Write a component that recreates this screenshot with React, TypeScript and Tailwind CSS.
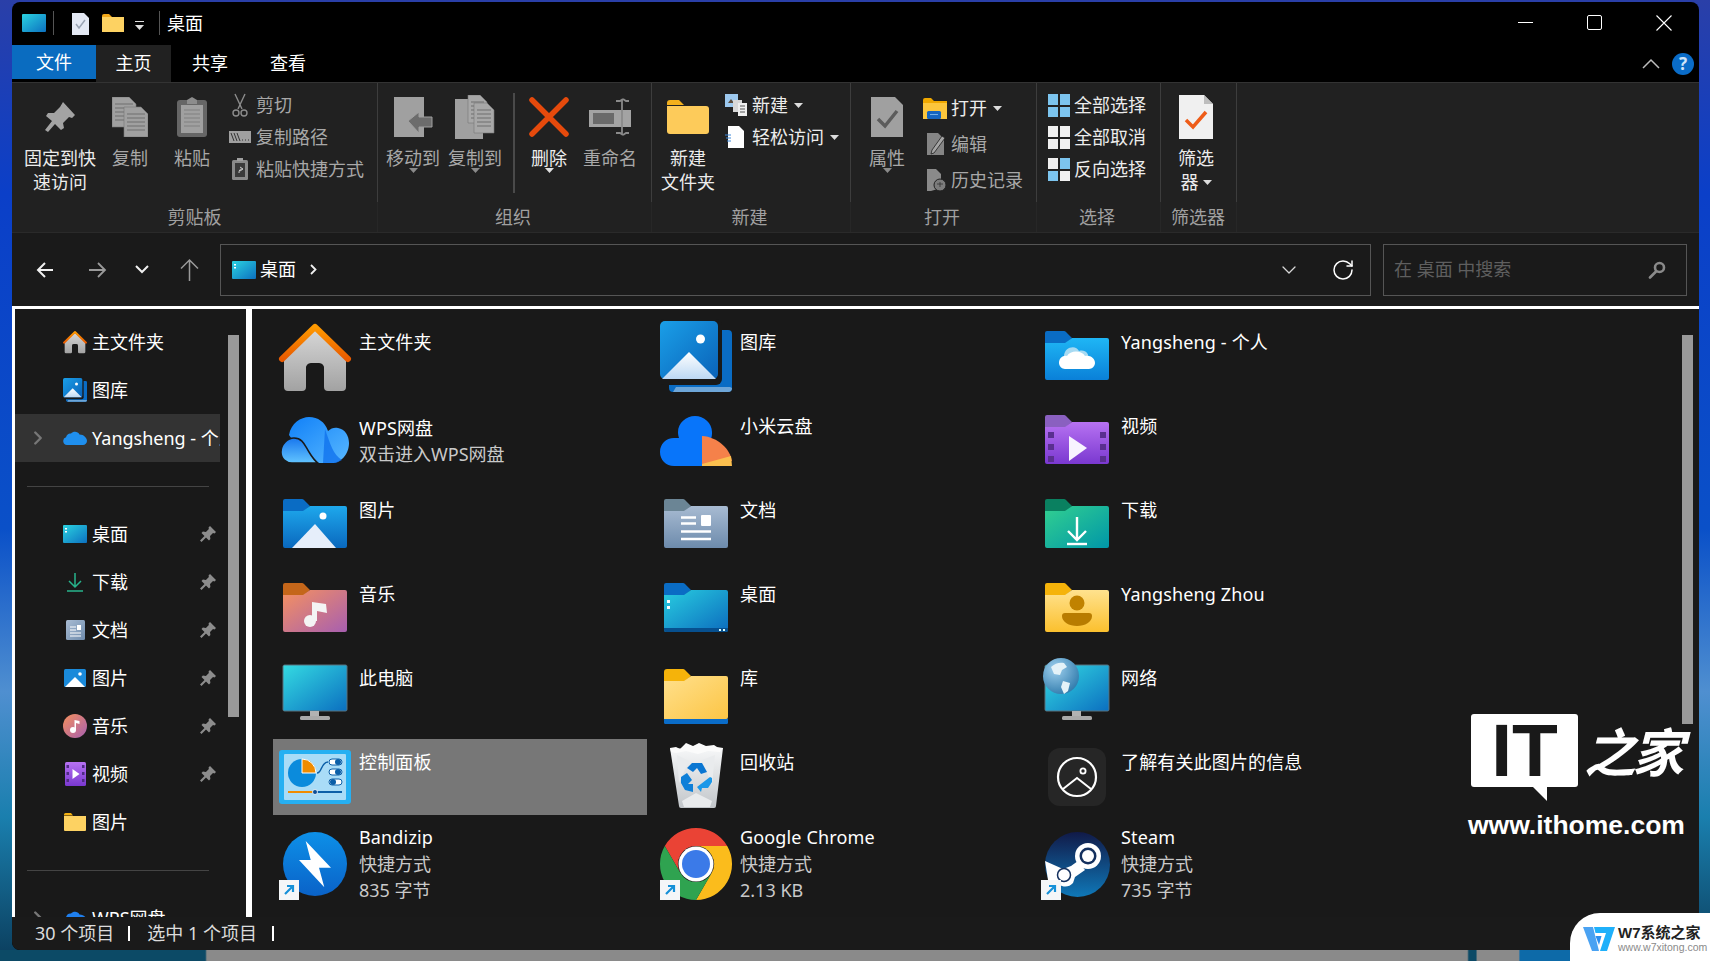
import { useId, type ReactNode } from "react";
import { ChevronDown, ChevronRight, RotateCw } from "lucide-react";

const GREY = "#a3a3a3";

function Ic({ size = 72, children }: { size?: number; children: ReactNode }) {
  return (
    <svg width={size} height={size} viewBox="0 0 72 72" className="overflow-visible shrink-0">
      {children}
    </svg>
  );
}

function Grad({ id, from, to, diag }: { id: string; from: string; to: string; diag?: boolean }) {
  return (
    <linearGradient id={id} x1="0" y1="0" x2={diag ? "1" : "0"} y2="1">
      <stop offset="0" stopColor={from} />
      <stop offset="1" stopColor={to} />
    </linearGradient>
  );
}

function Folder({
  tab,
  from,
  to,
  size,
  diag,
  children,
}: {
  tab: string;
  from: string;
  to: string;
  size?: number;
  diag?: boolean;
  children?: ReactNode;
}) {
  const id = useId();
  return (
    <Ic size={size}>
      <defs>
        <Grad id={id} from={from} to={to} diag={diag} />
      </defs>
      <path d="M4 12a2 2 0 0 1 2-2h17a3 3 0 0 1 2 1l6 6-6 5H4z" fill={tab} />
      <path d="M4 22h20l7-5h35a2 2 0 0 1 2 2v38a2 2 0 0 1-2 2H6a2 2 0 0 1-2-2z" fill={`url(#${id})`} />
      {children}
    </Ic>
  );
}

function HomeIcon({ size }: { size?: number }) {
  const a = useId();
  const b = useId();
  return (
    <Ic size={size}>
      <defs>
        <Grad id={a} from="#d6d6d6" to="#a2a2a2" />
        <Grad id={b} from="#ff9a00" to="#e85a00" />
      </defs>
      <path d="M5 36 36 9l31 27v30a4 4 0 0 1-4 4H49a4 4 0 0 1-4-4V48a5 5 0 0 0-5-6h-8a5 5 0 0 0-5 6v18a4 4 0 0 1-4 4H9a4 4 0 0 1-4-4z" fill={`url(#${a})`} />
      <path d="M3 38 36 6l33 32" fill="none" stroke={`url(#${b})`} strokeWidth="6" strokeLinecap="round" strokeLinejoin="round" />
    </Ic>
  );
}

function GalleryIcon({ size }: { size?: number }) {
  const a = useId();
  const b = useId();
  return (
    <Ic size={size}>
      <defs>
        <Grad id={a} from="#1a9fe8" to="#0a62b8" diag />
        <Grad id={b} from="#ffffff" to="#bcd8f4" />
      </defs>
      <path d="M58 9h10a4 4 0 0 1 4 4v54a4 4 0 0 1-4 4H13a4 4 0 0 1-4-4v-5h49z" fill="#0a6cc4" />
      <path d="M16 66h54l2 1a4 4 0 0 1-4 4H13z" fill="#6ea6d8" />
      <rect x="-2" y="-2" width="64" height="66" rx="6" fill="#191919" />
      <rect x="0" y="0" width="58" height="58" rx="5" fill={`url(#${a})`} />
      <circle cx="40.500" cy="18" r="4.500" fill="#fff" />
      <path d="M2 58 29 31l27 27z" fill={`url(#${b})`} />
    </Ic>
  );
}

function WpsIcon({ size }: { size?: number }) {
  const a = useId();
  const b = useId();
  return (
    <Ic size={size}>
      <defs>
        <Grad id={a} from="#1080f8" to="#58b8ff" diag />
        <Grad id={b} from="#1877ee" to="#62c4ff" />
      </defs>
      <path d="M10 30C12 18 22 12 30 12c9 0 16 5 19 14 3-3 7-4 10-3 7 1 11 8 11 15 0 11-8 20-17 20H30z" fill={`url(#${a})`} />
      <path d="M46 24c5 14 8 26 17 31l-6 3H44z" fill="#0d6fec" opacity="0.75" />
      <path d="M2 47c0-8 7-14 13-14 9 0 11 8 15 14 3 5 6 9 9 11H13C7 58 2 54 2 47z" fill={`url(#${b})`} stroke="#191919" strokeWidth="1.500" />
    </Ic>
  );
}

function XiaomiIcon() {
  return (
    <Ic>
      <path d="M42 61H14C6 61 0 55 0 47c0-8 6-14 14-14h5c-1-3-1-5-1-6 0-9 8-16 17-16s17 7 17 16c0 2 0 4-1 7H42z" fill="#0875fa" />
      <path d="M42 31c16 1 28 13 30 25l-30 5z" fill="#f5814a" />
      <path d="M42 61v-2l29-8 1 10z" fill="#fbbf4e" />
    </Ic>
  );
}

function MonitorIcon({ globe }: { globe?: boolean }) {
  const a = useId();
  const b = useId();
  return (
    <Ic>
      <defs>
        <Grad id={a} from="#34dbe2" to="#0b6fc0" diag />
        <radialGradient id={b} cx="0.35" cy="0.3" r="0.8">
          <stop offset="0" stopColor="#9fd0ee" />
          <stop offset="1" stopColor="#2a76a8" />
        </radialGradient>
      </defs>
      <rect x="4" y="8" width="64" height="46" rx="1.500" fill={`url(#${a})`} stroke="#59737f" strokeWidth="1" />
      <rect x="31" y="54" width="9" height="6" fill="#b2b2b2" />
      <rect x="21" y="59" width="30" height="4" rx="1.500" fill="#a9a9a9" />
      {globe && (
        <g>
          <circle cx="20" cy="19" r="18" fill={`url(#${b})`} />
          <path d="M10 10c4-4 9-5 13-4l3 4-5 3-2 5-6-1zM22 24l7 2-2 8-4 3-3-7z" fill="#e4f2f8" />
        </g>
      )}
    </Ic>
  );
}

function ControlIcon() {
  return (
    <Ic>
      <rect x="0" y="9" width="72" height="54" rx="3" fill="#26b0f2" />
      <rect x="5" y="13" width="62" height="46" rx="1" fill="#a9dcf7" />
      <circle cx="23" cy="32" r="14" fill="#0b8bdc" />
      <path d="M23 32V18a14 14 0 0 1 14 14z" fill="#f08c00" stroke="#fff" strokeWidth="1" />
      <path d="M38 32c5 0 4-11 11-11" fill="none" stroke="#0b5fa8" strokeWidth="1.500" />
      <rect x="50" y="18" width="13" height="6" rx="3" fill="#fff" stroke="#0b5fa8" />
      <rect x="50" y="28" width="13" height="6" rx="3" fill="#fff" stroke="#0b5fa8" />
      <rect x="50" y="38" width="13" height="6" rx="3" fill="#fff" stroke="#0b5fa8" />
      <circle cx="59" cy="21" r="3" fill="#0b5fa8" />
      <circle cx="59" cy="31" r="3" fill="#0b5fa8" />
      <circle cx="54" cy="41" r="3" fill="#0b5fa8" />
      <rect x="9" y="50" width="27" height="2" fill="#f08c00" />
      <rect x="36" y="50" width="27" height="2" fill="#0b5fa8" />
      <circle cx="36" cy="51" r="2.500" fill="#0b4f98" stroke="#fff" strokeWidth="0.800" />
    </Ic>
  );
}

function RecycleIcon() {
  const a = useId();
  return (
    <Ic>
      <defs>
        <Grad id={a} from="#f6f7f8" to="#c2c6ca" />
      </defs>
      <path d="M10 7l17 1 36-1-7 58a2 2 0 0 1-2 2H21a2 2 0 0 1-2-2z" fill={`url(#${a})`} />
      <path d="M10 7l6-1 4 2 6-6 7 3 6-3 7 3 8-1 3 2 6 1-3 4-12-1-10 3-12-3-10 2-5-1z" fill="#fbfbfb" />
      <path d="M17 14l12 6-10 22zM55 14l-3 30-10-25zM22 60l14-8 16 8-2 6H24z" fill="#e9ebed" />
      <path d="M27 27l5-5h10l5 9-6 2-4-6-4 4z" fill="#0a76d2" />
      <path d="M21 36l6-4 5 7-4 4h5v8l-8-2-4-7z" fill="#0e7fd8" />
      <path d="M52 37l-2-1-13 10 4 5 1-4h6l4-6z" fill="#1a97e8" />
    </Ic>
  );
}

function InfoIcon() {
  return (
    <Ic>
      <rect x="7" y="7" width="58" height="58" rx="12" fill="#262626" />
      <circle cx="36" cy="36" r="19" fill="none" stroke="#fff" strokeWidth="2.200" />
      <circle cx="42" cy="30" r="2.600" fill="none" stroke="#fff" strokeWidth="1.800" />
      <path d="M22 48l14-11 14 11" fill="none" stroke="#fff" strokeWidth="2" />
    </Ic>
  );
}

function ShortcutBadge() {
  return (
    <g>
      <rect x="0" y="55" width="20" height="20" fill="#f4f6f8" />
      <path d="M6 69l7-7M8 61h6v6" fill="none" stroke="#1590d8" strokeWidth="2.200" />
    </g>
  );
}

function BandizipIcon() {
  const a = useId();
  return (
    <Ic>
      <defs>
        <Grad id={a} from="#0d90e8" to="#0a62c8" />
      </defs>
      <circle cx="36" cy="39" r="32" fill={`url(#${a})`} />
      <path d="M26.700 16 52 42.700H40L45.300 62.300 20 35h11.700z" fill="#fff" />
      <ShortcutBadge />
    </Ic>
  );
}

function ChromeIcon() {
  return (
    <Ic>
      <path d="M36 3A36 36 0 0 1 67.200 21H36A18 18 0 0 0 20.400 48L4.800 21A36 36 0 0 1 36 3z" fill="#ea4335" />
      <path d="M67.200 21A36 36 0 0 1 36 75L51.600 48A18 18 0 0 0 36 21z" fill="#fbbc1c" />
      <path d="M4.800 21A36 36 0 0 0 36 75L51.600 48A18 18 0 0 1 20.400 48z" fill="#2fa350" />
      <circle cx="36" cy="39" r="17.500" fill="#fff" />
      <circle cx="36" cy="39" r="14" fill="#3b7ae8" />
      <ShortcutBadge />
    </Ic>
  );
}

function SteamIcon() {
  const a = useId();
  return (
    <Ic>
      <defs>
        <Grad id={a} from="#111a48" to="#0f78b8" />
      </defs>
      <circle cx="36.500" cy="39.500" r="32.500" fill={`url(#${a})`} />
      <path d="M4 36l18 8 8-3 7-5 7 9-10 7-2 6a11 11 0 0 1-11 3L7 55z" fill="#fff" />
      <circle cx="47" cy="31" r="13" fill="#fff" />
      <circle cx="47" cy="31" r="8.500" fill="#14305e" />
      <circle cx="47" cy="31" r="6" fill="#fff" />
      <circle cx="23" cy="50" r="6.500" fill="#fff" stroke="#14305e" strokeWidth="1.500" />
      <ShortcutBadge />
    </Ic>
  );
}

function LibraryIcon() {
  const a = useId();
  return (
    <Ic>
      <defs>
        <Grad id={a} from="#ffe08c" to="#fcc545" diag />
      </defs>
      <rect x="4" y="61" width="64" height="6" rx="1.500" fill="#0a6cc8" />
      <path d="M4 15a3 3 0 0 1 3-3h16a3 3 0 0 1 2 1l6 6-6 5H4z" fill="#f5b30a" />
      <path d="M4 24h20l7-5h35a2 2 0 0 1 2 2v39a2 2 0 0 1-2 2H4z" fill={`url(#${a})`} />
    </Ic>
  );
}

const folderIcons = {
  pictures: (
    <Folder tab="#0a6cc4" from="#1ea8ec" to="#0a68be">
      <circle cx="44" cy="27" r="3.500" fill="#fff" />
      <path d="M13 59 36 35l21 24z" fill="#e6eefa" />
    </Folder>
  ),
  docs: (
    <Folder tab="#6b8595" from="#a8bbd2" to="#6d8bac">
      <path d="M21 28.500h15M21 34.500h15M21 42.500h30M21 50h30" stroke="#fff" strokeWidth="2.600" />
      <rect x="41" y="26" width="10" height="11" rx="1" fill="#fff" />
    </Folder>
  ),
  desktop: (
    <Folder tab="#0a6cc4" from="#28cde0" to="#0c6cbe" diag>
      <path d="M4 55h64v2a2 2 0 0 1-2 2H6a2 2 0 0 1-2-2z" fill="#07508f" />
      <path d="M7 27h3v3H7zM7 33h3v3H7z" fill="#fff" />
      <path d="M59 56h2v2h-2zM63 56h2v2h-2z" fill="#dff" />
    </Folder>
  ),
  music: (
    <Folder tab="#c4661a" from="#f59160" to="#a75fb0" diag>
      <circle cx="31" cy="48" r="6" fill="#f4f4f4" />
      <path d="M33 48V29l14 2 1 9-10-2v10z" fill="#f4f4f4" />
    </Folder>
  ),
  onedrive: (
    <Folder tab="#0a6cc4" from="#1fb6f5" to="#0a80d8">
      <g transform="translate(-3 -4)">
        <path d="M26 39c0-9 12-12 15-5 6-2 11 3 9 8H26z" fill="#a7daf2" />
        <path d="M21 46c0-5 4-8 8-7 3-6 15-6 18 0 6-1 10 3 10 7 0 3-3 6-6 6H27c-3 0-6-3-6-6z" fill="#fff" />
      </g>
    </Folder>
  ),
  video: (
    <Folder tab="#8a60c0" from="#b772f2" to="#7a38d0">
      <path d="M7 27h6v6H7zM7 39h6v6H7zM7 51h6v6H7zM59 27h6v6h-6zM59 39h6v6h-6zM59 51h6v6h-6z" fill="#5a2f90" />
      <path d="M28 31l18 12-18 13z" fill="#f8f4ff" />
    </Folder>
  ),
  download: (
    <Folder tab="#0a8060" from="#32d090" to="#0096a8" diag>
      <path d="M36 28v23M27 42l9 9 9-9" fill="none" stroke="#fff" strokeWidth="2.400" />
      <path d="M26 55h20" stroke="#fff" strokeWidth="2.400" />
    </Folder>
  ),
  user: (
    <Folder tab="#f5b30a" from="#ffe28e" to="#fbc02e">
      <circle cx="36" cy="30" r="7.500" fill="#c08200" />
      <path d="M24 40h24a3 3 0 0 1 3 3c0 6-7 10-15 10s-15-4-15-10a3 3 0 0 1 3-3z" fill="#b87c00" />
    </Folder>
  ),
};

type Tile = { icon: ReactNode; name: string; lines?: string[]; selected?: boolean };

const tiles: Tile[] = [
  { icon: <HomeIcon />, name: "主文件夹" },
  { icon: <GalleryIcon />, name: "图库" },
  { icon: folderIcons.onedrive, name: "Yangsheng - 个人" },
  { icon: <WpsIcon />, name: "WPS网盘", lines: ["双击进入WPS网盘"] },
  { icon: <XiaomiIcon />, name: "小米云盘" },
  { icon: folderIcons.video, name: "视频" },
  { icon: folderIcons.pictures, name: "图片" },
  { icon: folderIcons.docs, name: "文档" },
  { icon: folderIcons.download, name: "下载" },
  { icon: folderIcons.music, name: "音乐" },
  { icon: folderIcons.desktop, name: "桌面" },
  { icon: folderIcons.user, name: "Yangsheng Zhou" },
  { icon: <MonitorIcon />, name: "此电脑" },
  { icon: <LibraryIcon />, name: "库" },
  { icon: <MonitorIcon globe />, name: "网络" },
  { icon: <ControlIcon />, name: "控制面板", selected: true },
  { icon: <RecycleIcon />, name: "回收站" },
  { icon: <InfoIcon />, name: "了解有关此图片的信息" },
  { icon: <BandizipIcon />, name: "Bandizip", lines: ["快捷方式", "835 字节"] },
  { icon: <ChromeIcon />, name: "Google Chrome", lines: ["快捷方式", "2.13 KB"] },
  { icon: <SteamIcon />, name: "Steam", lines: ["快捷方式", "735 字节"] },
];

// ---- ribbon glyphs ----

function Sheet({ x, y, w, h, fill = "#a0a0a0", lines }: { x: number; y: number; w: number; h: number; fill?: string; lines?: boolean }) {
  const rows = lines ? Array.from({ length: Math.floor((h - 8) / 4) }, (_, i) => y + 7 + i * 4) : [];
  return (
    <g>
      <path d={`M${x} ${y}h${w - 7}l7 7v${h - 7}h-${w}z`} fill={fill} stroke="#777" strokeWidth="0.600" />
      {rows.map((r) => (
        <path key={r} d={`M${x + 3} ${r}h${w - 6}`} stroke="#6e6e6e" strokeWidth="1" />
      ))}
    </g>
  );
}

const PinGlyph = () => (
  <svg width="32" height="32" viewBox="0 0 32 32">
    <path d="M19 1l12 13-3 3-3-1-6 6 1 5-3 2-6-6-7 8-3-2 7-9-6-5 2-3 6 0 6-6z" fill={GREY} />
  </svg>
);
const CopyGlyph = () => (
  <svg width="36" height="40" viewBox="0 0 36 40">
    <Sheet x={0} y={0} w={24} h={30} lines />
    <Sheet x={12} y={10} w={24} h={30} lines />
  </svg>
);
const PasteGlyph = () => (
  <svg width="30" height="40" viewBox="0 0 30 40">
    <rect x="0" y="3" width="30" height="37" rx="3" fill="#666" />
    <rect x="4" y="8" width="22" height="28" fill="#a0a0a0" />
    <path d="M7 13h16M7 17h16M7 21h16M7 25h16M7 29h16" stroke="#808080" />
    <path d="M10 3l5-3 5 3v4H10z" fill="#8c8c8c" />
  </svg>
);
const ScissorsGlyph = () => (
  <svg width="16" height="24" viewBox="0 0 16 24" fill="none" stroke="#8c8c8c" strokeWidth="1.400" className="ml-[3px]">
    <path d="M3 1l7 15M13 1 6 16" />
    <circle cx="4" cy="20" r="3" />
    <circle cx="12" cy="20" r="3" />
  </svg>
);
const PathGlyph = () => (
  <svg width="22" height="12" viewBox="0 0 22 12">
    <rect width="22" height="12" fill="#a0a0a0" />
    <path d="M2 2l3 8M5 2l3 8M8 2l3 8" stroke="#333" strokeWidth="1" />
    <path d="M13 9h1M16 9h1M19 9h1" stroke="#333" strokeWidth="1.200" />
  </svg>
);
const PasteLinkGlyph = () => (
  <svg width="16" height="22" viewBox="0 0 16 22" className="ml-[3px]">
    <rect x="0" y="2" width="16" height="20" rx="1.500" fill="#8a8a8a" />
    <rect x="3" y="5" width="10" height="14" fill="#3a3a3a" />
    <path d="M5 0h6v3H5z" fill="#a0a0a0" />
    <path d="M7 15c0-3 1-4 3-4M8 9l3 2-3 2" stroke="#ccc" fill="none" />
  </svg>
);
const MoveGlyph = () => (
  <svg width="40" height="40" viewBox="0 0 40 40">
    <rect x="1" y="0" width="30" height="40" fill="#a0a0a0" />
    <path d="M15 24 26 15v5h13v10H26v6z" fill="#6c6c6c" stroke="#a0a0a0" strokeWidth="1" />
  </svg>
);
const CopyToGlyph = () => (
  <svg width="40" height="44" viewBox="0 0 40 44">
    <rect x="0" y="4" width="28" height="40" fill="#a0a0a0" />
    <Sheet x={13} y={0} w={19} h={28} fill="#a8a8a8" lines />
    <Sheet x={19} y={8} w={20} h={30} fill="#a8a8a8" lines />
  </svg>
);
const DeleteGlyph = () => (
  <svg width="42" height="42" viewBox="0 0 42 42">
    <path d="M4 4 38 38M38 4 4 38" stroke="#e64a0c" strokeWidth="5.500" strokeLinecap="round" />
  </svg>
);
const RenameGlyph = () => (
  <svg width="42" height="38" viewBox="0 0 42 38">
    <rect x="0" y="12" width="42" height="17" fill="#a3a3a3" />
    <rect x="4" y="15" width="21" height="11" fill="#6a6a6a" />
    <path d="M27 3h4l3-2M34 1l3 2h3M33 2v34M27 35h4l3 2M34 37l3-2h3" fill="none" stroke="#8a8a8a" strokeWidth="1.800" />
  </svg>
);
const NewFolderGlyph = () => (
  <svg width="42" height="34" viewBox="0 0 42 34">
    <path d="M0 3a3 3 0 0 1 3-3h9l5 5H0z" fill="#f3b01c" />
    <path d="M0 6h39a3 3 0 0 1 3 3v22a3 3 0 0 1-3 3H3a3 3 0 0 1-3-3z" fill="#fdcb5a" />
  </svg>
);
const NewItemGlyph = () => (
  <svg width="22" height="22" viewBox="0 0 22 22" className="ml-[1px]">
    <rect x="0" y="0" width="13" height="13" fill="#9cc8ee" />
    <path d="M3 9l3-4 3 4z" fill="#5a4a3a" />
    <rect x="8" y="6" width="9" height="12" fill="#d8d8d8" />
    <path d="M13 9h9v13h-9z" fill="#efefef" />
    <path d="M15 12h5M15 15h5M15 18h5" stroke="#555" />
  </svg>
);
const EasyGlyph = () => (
  <svg width="20" height="22" viewBox="0 0 20 22" className="ml-[1px]">
    <path d="M3 0h11l5 5v17H3z" fill="#fff" />
    <path d="M0 9h6M1 12h5M2 15h4" stroke="#3a86d8" strokeWidth="1" />
  </svg>
);
const PropsGlyph = () => (
  <svg width="32" height="40" viewBox="0 0 32 40">
    <path d="M0 0h24l8 8v32H0z" fill="#a0a0a0" />
    <path d="M7 22l7 7 12-15" fill="none" stroke="#5c5c5c" strokeWidth="3.500" />
  </svg>
);
const OpenGlyph = () => (
  <svg width="24" height="21" viewBox="0 0 24 21">
    <path d="M0 2a2 2 0 0 1 2-2h6l3 3h13v18H0z" fill="#f0a800" />
    <path d="M0 5h24v16H0z" fill="#fcc63c" />
    <rect x="4" y="13" width="14" height="8" rx="1.500" fill="#1565c0" />
    <path d="M7 16.500h8" stroke="#72b0e8" />
  </svg>
);
const EditGlyph = () => (
  <svg width="19" height="22" viewBox="0 0 19 22" className="ml-[4px]">
    <path d="M0 0h11l6 6v16H0z" fill="#858585" />
    <path d="M18 5 7 20l-3 1 1-4L15 3z" fill="#a5a5a5" stroke="#212121" strokeWidth="0.800" />
  </svg>
);
const HistoryGlyph = () => (
  <svg width="20" height="22" viewBox="0 0 20 22" className="ml-[4px]">
    <path d="M0 0h9l5 5v14L4 22H0z" fill="#8a8a8a" />
    <circle cx="13" cy="16" r="6" fill="#7c7c7c" stroke="#212121" />
    <path d="M10 15h6M13 13v5" stroke="#333" strokeWidth="0.800" />
  </svg>
);
function Grid4({ a, b, c, d }: { a: string; b: string; c: string; d: string }) {
  return (
    <svg width="22" height="23" viewBox="0 0 22 23">
      <rect x="0" y="0" width="10" height="11" fill={a} />
      <rect x="12" y="0" width="10" height="11" fill={b} />
      <rect x="0" y="13" width="10" height="10" fill={c} />
      <rect x="12" y="13" width="10" height="10" fill={d} />
    </svg>
  );
}
const FilterGlyph = () => (
  <svg width="34" height="44" viewBox="0 0 34 44">
    <path d="M0 0h25l9 9v35H0z" fill="#f0f0f0" />
    <path d="M25 0v9h9z" fill="#bdbdbd" />
    <path d="M7 25l7 7 13-15" fill="none" stroke="#ee5c18" strokeWidth="3.500" />
  </svg>
);
const Caret = ({ color = "#dcdcdc" }: { color?: string }) => (
  <svg width="9" height="5" viewBox="0 0 9 5" className="shrink-0">
    <path d="M0 0h9L4.500 5z" fill={color} />
  </svg>
);

function BigBtn({
  icon,
  lines,
  w,
  dim,
  caret,
  inlineCaret,
}: {
  icon: ReactNode;
  lines: string[];
  w: string;
  dim?: boolean;
  caret?: string;
  inlineCaret?: boolean;
}) {
  return (
    <div className={`flex flex-col items-center shrink-0 ${w}`}>
      <div className="h-[58px] flex items-center justify-center">{icon}</div>
      {lines.map((l, i) => (
        <div key={l} className={`flex items-center gap-[4px] h-[24px] leading-[24px] whitespace-nowrap ${dim ? "text-[#a8a8a8]" : "text-[#ececec]"}`}>
          {l}
          {inlineCaret && i === lines.length - 1 && <Caret />}
        </div>
      ))}
      {caret && (
        <div className="mt-[-2px]">
          <Caret color={caret} />
        </div>
      )}
    </div>
  );
}

function SmallRow({
  icon,
  label,
  iconW,
  h,
  dim,
  caret,
}: {
  icon: ReactNode;
  label: string;
  iconW: string;
  h: string;
  dim?: boolean;
  caret?: boolean;
}) {
  return (
    <div className={`flex items-center ${h}`}>
      <span className={`flex shrink-0 ${iconW}`}>{icon}</span>
      <span className={`whitespace-nowrap ${dim ? "text-[#a8a8a8]" : "text-[#ececec]"}`}>{label}</span>
      {caret && (
        <span className="ml-[6px]">
          <Caret />
        </span>
      )}
    </div>
  );
}

function Group({
  label,
  w,
  className = "",
  labelPad = "pr-[3px]",
  children,
}: {
  label: string;
  w: string;
  className?: string;
  labelPad?: string;
  children: ReactNode;
}) {
  return (
    <div className={`flex flex-col shrink-0 ${w}`}>
      <div className={`h-[119px] flex pt-[5px] border-r border-[#3d3d3d] ${className}`}>{children}</div>
      <div className={`h-[30px] flex items-center justify-center text-[#a0a0a0] border-r border-[#272727] ${labelPad}`}>{label}</div>
    </div>
  );
}

// ---- nav pane ----

const DesktopMini = () => (
  <svg width="24" height="18" viewBox="0 0 24 18">
    <defs>
      <linearGradient id="dm" x1="0" y1="0" x2="1" y2="1">
        <stop offset="0" stopColor="#2bd3e0" />
        <stop offset="1" stopColor="#0c70c0" />
      </linearGradient>
    </defs>
    <rect width="24" height="18" rx="1" fill="url(#dm)" />
    <path d="M2 3h2v1.500H2zM2 6h2v1.500H2z" fill="#fff" />
  </svg>
);
const DownloadMini = () => (
  <svg width="20" height="20" viewBox="0 0 20 20" fill="none" stroke="#27b48c" strokeWidth="1.500">
    <path d="M10 1v13M4 9l6 6 6-6M2 19h16" />
  </svg>
);
const DocMini = () => (
  <svg width="19" height="20" viewBox="0 0 19 20">
    <defs>
      <linearGradient id="docm" x1="0" y1="0" x2="1" y2="1">
        <stop offset="0" stopColor="#a9bcd3" />
        <stop offset="1" stopColor="#6f8cad" />
      </linearGradient>
    </defs>
    <rect width="19" height="20" rx="1.500" fill="url(#docm)" />
    <path d="M4 7h6M4 10h6M4 13h11M4 16h11" stroke="#fff" />
    <rect x="11" y="5" width="4" height="5" fill="#fff" />
  </svg>
);
const PicMini = () => (
  <svg width="22" height="18" viewBox="0 0 22 18">
    <rect width="22" height="18" rx="1.500" fill="#1a8ada" />
    <circle cx="16" cy="5" r="1.800" fill="#fff" />
    <path d="M1 18 11 8l10 10z" fill="#fff" />
  </svg>
);
const MusicMini = () => (
  <svg width="24" height="24" viewBox="0 0 24 24">
    <defs>
      <linearGradient id="mm" x1="0" y1="0" x2="1" y2="1">
        <stop offset="0" stopColor="#f5905c" />
        <stop offset="1" stopColor="#a75fb0" />
      </linearGradient>
    </defs>
    <circle cx="12" cy="12" r="12" fill="url(#mm)" />
    <circle cx="10" cy="16" r="3" fill="#fff" />
    <path d="M11.500 16V6l5 1v3l-3.500-1v7z" fill="#fff" />
  </svg>
);
const VideoMini = () => (
  <svg width="21" height="24" viewBox="0 0 21 24">
    <defs>
      <linearGradient id="vm" x1="0" y1="0" x2="0" y2="1">
        <stop offset="0" stopColor="#b772f2" />
        <stop offset="1" stopColor="#7a38d0" />
      </linearGradient>
    </defs>
    <rect width="21" height="24" rx="1.500" fill="url(#vm)" />
    <path d="M1.500 3h2.500v3H1.500zM1.500 10h2.500v3H1.500zM1.500 17h2.500v3H1.500zM17 3h2.500v3H17zM17 10h2.500v3H17zM17 17h2.500v3H17z" fill="#4f2a84" />
    <path d="M7.500 7l7 5-7 5z" fill="#fff" />
  </svg>
);
const FolderMini = () => (
  <svg width="22" height="18" viewBox="0 0 22 18">
    <path d="M0 1.500A1.500 1.500 0 0 1 1.500 0H7l2 2.500H0z" fill="#f2b011" />
    <path d="M0 3h22v14a1 1 0 0 1-1 1H1a1 1 0 0 1-1-1z" fill="#fdd262" />
  </svg>
);
const CloudMini = ({ color = "#1f8fee" }: { color?: string }) => (
  <svg width="24" height="14" viewBox="0 0 24 14">
    <path d="M4 14a4 4 0 0 1-1-7.800C4 3 6 2 8 2.500 10 0 15 0 16.500 3.500 21 3.500 24 7 24 10c0 2-2 4-4 4z" fill={color} />
  </svg>
);
const PinMini = () => (
  <svg width="16" height="16" viewBox="0 0 16 16">
    <path d="M10 0l6 6-1.500 1.500-1.500-.4-3 3 .4 3L9 14.500 6 11.500 1.500 16 0 14.500 4.500 10 1.500 7l1.400-1.400 3 .4 3-3-.4-1.500z" fill="#8c8c8c" />
  </svg>
);

type NavRow = { icon: ReactNode; label: string; pin?: boolean };

function NavItem({ icon, label, pin, active, arrow }: NavRow & { active?: boolean; arrow?: boolean }) {
  return (
    <div className={`flex items-center h-[48px] w-[205px] shrink-0 overflow-hidden ${active ? "bg-[#333333]" : ""}`}>
      <span className="w-[48px] pl-[12px] shrink-0">
        {arrow && <ChevronRight size={22} strokeWidth={2.600} className="text-[#777777]" />}
      </span>
      <span className="w-[24px] flex justify-center shrink-0">{icon}</span>
      <span className="ml-[5px] whitespace-nowrap text-white">{label}</span>
      {pin && (
        <span className="ml-auto mr-[4px] flex">
          <PinMini />
        </span>
      )}
    </div>
  );
}

const Divider = () => <div className="h-px w-[182px] ml-[12px] bg-[#444444] mt-[24px] mb-[23px] shrink-0" />;

export default function App() {
  return (
    <div className="relative w-[1710px] h-[961px] overflow-hidden flex flex-col pt-[2px] pl-[12px] bg-[linear-gradient(180deg,#2a3fa8_0%,#0b3fc8_20%,#0a50c8_55%,#4f8fd0_72%,#1a7fae_85%,#0b3d5c_100%)] font-['Noto_Sans','Noto_Sans_CJK_SC',sans-serif] text-[18px] text-white">
      <div className="w-[1687px] h-[948px] shrink-0 flex flex-col bg-black rounded-[8px] overflow-hidden">
        {/* title bar */}
        <div className="h-[43px] flex items-center pb-[2px] shrink-0">
          <span className="ml-[10px] flex">
            <svg width="24" height="18" viewBox="0 0 24 18">
              <defs>
                <linearGradient id="tb" x1="0" y1="0" x2="1" y2="1">
                  <stop offset="0" stopColor="#2bd3e0" />
                  <stop offset="1" stopColor="#0c70c0" />
                </linearGradient>
              </defs>
              <rect width="24" height="18" rx="1" fill="url(#tb)" />
            </svg>
          </span>
          <span className="ml-[7px] w-px h-[24px] bg-[#555555]" />
          <span className="ml-[18px] flex mt-[3px]">
            <svg width="17" height="22" viewBox="0 0 17 22">
              <path d="M0 0h12l5 5v17H0z" fill="#e4e9f4" />
              <path d="M4 11l3 4 6-8" fill="none" stroke="#9aa4b4" strokeWidth="1.500" />
            </svg>
          </span>
          <span className="ml-[13px] flex">
            <svg width="22" height="18" viewBox="0 0 22 18">
              <path d="M0 2a2 2 0 0 1 2-2h5l3 3H0z" fill="#f2a81a" />
              <path d="M0 3h22v15H0z" fill="#fdd262" />
            </svg>
          </span>
          <span className="ml-[11px] flex flex-col items-center gap-[3px] mt-[6px]">
            <span className="w-[9px] h-px bg-[#dddddd]" />
            <Caret />
          </span>
          <span className="ml-[15px] w-px h-[24px] bg-[#555555]" />
          <span className="ml-[7px] leading-none">桌面</span>
          <div className="ml-auto flex h-full">
            <div className="w-[69px] flex items-center justify-center">
              <span className="w-[15px] h-px bg-white" />
            </div>
            <div className="w-[69px] flex items-center justify-center">
              <span className="w-[15px] h-[15px] border border-white rounded-[2px]" />
            </div>
            <div className="w-[70px] flex items-center justify-center">
              <svg width="16" height="16" viewBox="0 0 16 16" stroke="#fff" strokeWidth="1.100">
                <path d="M.5.5l15 15M15.500.5l-15 15" />
              </svg>
            </div>
          </div>
        </div>

        {/* tabs */}
        <div className="h-[37px] flex items-start shrink-0">
          <div className="w-[84px] h-[34px] flex items-center justify-center bg-[#0a6cc0]">文件</div>
          <div className="w-[75px] h-[37px] flex items-center justify-center bg-[#212121]">主页</div>
          <div className="w-[78px] h-[37px] flex items-center justify-center">共享</div>
          <div className="w-[78px] h-[37px] flex items-center justify-center">查看</div>
          <div className="ml-auto flex items-center h-[37px] pr-[5px] gap-[12px]">
            <svg width="18" height="11" viewBox="0 0 18 11" fill="none" stroke="#bdbdbd" strokeWidth="1.500">
              <path d="M1 10 9 2l8 8" />
            </svg>
            <span className="w-[22px] h-[22px] rounded-full bg-[#0a6cc8] flex items-center justify-center text-[17px] font-bold leading-none text-[#cfe4f8]">
              ?
            </span>
          </div>
        </div>

        {/* ribbon */}
        <div className="h-[150px] flex bg-[#212121] border-t border-[#333333] shrink-0 text-[18px]">
          <Group label="剪贴板" w="w-[366px]" className="pl-[10px]" labelPad="">
            <BigBtn icon={<PinGlyph />} lines={["固定到快", "速访问"]} w="w-[76px]" />
            <BigBtn icon={<CopyGlyph />} lines={["复制"]} w="w-[64px]" dim />
            <BigBtn icon={<PasteGlyph />} lines={["粘贴"]} w="w-[60px]" dim />
            <div className="ml-[7px] pt-[1px]">
              <SmallRow icon={<ScissorsGlyph />} label="剪切" iconW="w-[27px]" h="h-[32px]" dim />
              <SmallRow icon={<PathGlyph />} label="复制路径" iconW="w-[27px]" h="h-[32px]" dim />
              <SmallRow icon={<PasteLinkGlyph />} label="粘贴快捷方式" iconW="w-[27px]" h="h-[32px]" dim />
            </div>
          </Group>
          <Group label="组织" w="w-[274px]" className="pl-[4px]">
            <BigBtn icon={<MoveGlyph />} lines={["移动到"]} w="w-[62px]" dim caret="#8a8a8a" />
            <BigBtn icon={<CopyToGlyph />} lines={["复制到"]} w="w-[62px]" dim caret="#8a8a8a" />
            <div className="ml-[7px] mt-[5px] w-[2px] h-[100px] bg-[#4a4a4a]" />
            <div className="ml-[6px] flex">
              <BigBtn icon={<DeleteGlyph />} lines={["删除"]} w="w-[56px]" caret="#e0e0e0" />
              <BigBtn icon={<RenameGlyph />} lines={["重命名"]} w="w-[66px]" dim />
            </div>
          </Group>
          <Group label="新建" w="w-[199px]">
            <BigBtn icon={<NewFolderGlyph />} lines={["新建", "文件夹"]} w="w-[72px]" />
            <div className="pt-[1px]">
              <SmallRow icon={<NewItemGlyph />} label="新建" iconW="w-[28px]" h="h-[32px]" caret />
              <SmallRow icon={<EasyGlyph />} label="轻松访问" iconW="w-[28px]" h="h-[32px]" caret />
            </div>
          </Group>
          <Group label="打开" w="w-[186px]" className="pl-[8px]">
            <BigBtn icon={<PropsGlyph />} lines={["属性"]} w="w-[56px]" dim caret="#8a8a8a" />
            <div className="ml-[8px] pt-[2px]">
              <SmallRow icon={<OpenGlyph />} label="打开" iconW="w-[28px]" h="h-[36px]" caret />
              <SmallRow icon={<EditGlyph />} label="编辑" iconW="w-[28px]" h="h-[36px]" dim />
              <SmallRow icon={<HistoryGlyph />} label="历史记录" iconW="w-[28px]" h="h-[36px]" dim />
            </div>
          </Group>
          <Group label="选择" w="w-[124px]" className="pl-[11px]">
            <div className="pt-[1px]">
              <SmallRow icon={<Grid4 a="#7cc4ee" b="#7cc4ee" c="#7cc4ee" d="#7cc4ee" />} label="全部选择" iconW="w-[26px]" h="h-[32px]" />
              <SmallRow icon={<Grid4 a="#f0f0f0" b="#f0f0f0" c="#f0f0f0" d="#f0f0f0" />} label="全部取消" iconW="w-[26px]" h="h-[32px]" />
              <SmallRow icon={<Grid4 a="#f0f0f0" b="#7cc4ee" c="#7cc4ee" d="#f0f0f0" />} label="反向选择" iconW="w-[26px]" h="h-[32px]" />
            </div>
          </Group>
          <Group label="筛选器" w="w-[76px]" labelPad="pr-[1px]">
            <BigBtn icon={<FilterGlyph />} lines={["筛选", "器"]} w="w-[70px]" inlineCaret />
          </Group>
        </div>

        {/* address bar */}
        <div className="h-[74px] flex items-center bg-[#1a1a1a] border-t border-[#2a2a2a] pl-[8px] shrink-0">
          <div className="w-[49px] flex justify-center">
            <svg width="18" height="18" viewBox="0 0 18 18" fill="none" stroke="#f0f0f0" strokeWidth="2">
              <path d="M17 9H2M9 2 2 9l7 7" />
            </svg>
          </div>
          <div className="w-[56px] flex justify-center">
            <svg width="19" height="18" viewBox="0 0 19 18" fill="none" stroke="#9a9a9a" strokeWidth="1.800">
              <path d="M1 9h16M10 2l7 7-7 7" />
            </svg>
          </div>
          <div className="w-[34px] flex justify-center">
            <svg width="14" height="9" viewBox="0 0 14 9" fill="none" stroke="#f0f0f0" strokeWidth="2">
              <path d="M1 1l6 6 6-6" />
            </svg>
          </div>
          <div className="w-[60px] flex justify-center">
            <svg width="19" height="23" viewBox="0 0 19 23" fill="none" stroke="#9a9a9a" strokeWidth="1.500">
              <path d="M9.500 23V2M1 10.500 9.500 2l8.500 8.500" />
            </svg>
          </div>
          <div className="ml-[1px] w-[1151px] h-[52px] border border-[#555555] flex items-center pl-[11px]">
            <DesktopMini />
            <span className="ml-[4px]">桌面</span>
            <svg className="ml-[14px]" width="7" height="11" viewBox="0 0 7 11" fill="none" stroke="#f0f0f0" strokeWidth="1.800">
              <path d="M1 1l4.500 4.500L1 10" />
            </svg>
            <ChevronDown size={24} strokeWidth={1.300} className="ml-auto mr-[30px] text-[#d8d8d8]" />
            <RotateCw size={24} strokeWidth={1.500} className="mr-[15px] text-white" />
          </div>
          <div className="ml-[12px] w-[304px] h-[52px] border border-[#555555] flex items-center pl-[10px] pr-[20px]">
            <span className="text-[#5f5f5f] whitespace-pre">在 桌面 中搜索</span>
            <svg className="ml-auto" width="18" height="18" viewBox="0 0 18 18" fill="none" stroke="#8a8a8a" strokeWidth="2.600">
              <circle cx="11.500" cy="6.500" r="4.500" />
              <path d="M8 10.500 2 16.500" strokeLinecap="round" />
            </svg>
          </div>
        </div>

        {/* top rule */}
        <div className="h-[3px] bg-white shrink-0" />

        {/* panes */}
        <div className="h-[608px] flex bg-[#191919] shrink-0">
          <div className="w-[3px] bg-white shrink-0" />
          <div className="w-[231px] flex shrink-0 overflow-hidden">
            <div className="w-[213px] pt-[9px] flex flex-col shrink-0">
              <NavItem icon={<HomeIcon size={24} />} label="主文件夹" />
              <NavItem icon={<GalleryIcon size={24} />} label="图库" />
              <NavItem icon={<CloudMini />} label="Yangsheng - 个人" active arrow />
              <Divider />
              <NavItem icon={<DesktopMini />} label="桌面" pin />
              <NavItem icon={<DownloadMini />} label="下载" pin />
              <NavItem icon={<DocMini />} label="文档" pin />
              <NavItem icon={<PicMini />} label="图片" pin />
              <NavItem icon={<MusicMini />} label="音乐" pin />
              <NavItem icon={<VideoMini />} label="视频" pin />
              <NavItem icon={<FolderMini />} label="图片" />
              <Divider />
              <NavItem icon={<CloudMini color="#1f7fee" />} label="WPS网盘" arrow />
            </div>
            <div className="pt-[26px]">
              <div className="w-[11px] h-[382px] bg-[#999999]" />
            </div>
          </div>
          <div className="w-[6px] bg-white shrink-0" />
          <div className="flex-1 flex min-w-0">
            <div className="flex-1 min-w-0 pl-[21px] pt-[10px] overflow-hidden">
              <div className="grid grid-cols-[repeat(3,374px)] gap-x-[7px] gap-y-[8px]">
                {tiles.map((t) => (
                  <div key={t.name} className={`flex h-[76px] pl-[6px] ${t.selected ? "bg-[#777777]" : ""}`}>
                    <div className="w-[72px] pt-[2px] shrink-0">{t.icon}</div>
                    <div className={`ml-[8px] flex flex-col justify-center leading-[26.5px] ${t.lines ? (t.lines.length > 1 ? "pt-[6px]" : "") : "pb-[30px]"}`}>
                      <div className="text-white whitespace-nowrap tracking-[0.15px]">{t.name}</div>
                      {t.lines?.map((l) => (
                        <div key={l} className="text-[#c9c9c9] whitespace-nowrap">
                          {l}
                        </div>
                      ))}
                    </div>
                  </div>
                ))}
              </div>
            </div>
            <div className="w-[17px] pt-[26px] shrink-0">
              <div className="w-[11px] h-[389px] bg-[#999999]" />
            </div>
          </div>
        </div>

        {/* status bar */}
        <div className="h-[33px] flex items-center bg-[#1a1a1a] pl-[23px] text-[#dcdcdc] shrink-0">
          <span>30 个项目</span>
          <span className="ml-[14px] w-[2px] h-[15px] bg-white" />
          <span className="ml-[17px]">选中 1 个项目</span>
          <span className="ml-[15px] w-[2px] h-[15px] bg-white" />
        </div>
      </div>

      {/* desktop strip below the window */}
      <div className="h-[11px] ml-[-12px] bg-[linear-gradient(90deg,#0c4a66_0%,#0c4a66_12%,#8a8a8a_12.1%,#8a8a8a_85.8%,#0c4a66_85.9%,#0c4a66_86.3%,#8a8a8a_86.4%,#8a8a8a_88.8%,#0d6aa8_88.9%)]" />

      {/* site watermark */}
      <div className="absolute left-[1468px] top-[714px] w-[220px]">
        <div className="flex items-start">
          <div className="relative w-[107px] h-[73px] bg-white rounded-[3px] flex items-center justify-center font-['Liberation_Sans',sans-serif] font-bold text-[75px] leading-none text-[#191919] ml-[3px]">
            IT
            <span className="absolute left-[62px] top-[73px] border-t-[14px] border-t-white border-l-[14px] border-l-transparent" />
          </div>
          <div className="ml-[6px] mt-[-6px] font-['Noto_Sans_CJK_SC',sans-serif] font-bold text-[52px] leading-[84px] italic whitespace-nowrap tracking-[-4px] text-white">
            之家
          </div>
        </div>
        <div className="mt-[18px] font-['Liberation_Sans',sans-serif] font-bold text-[26.5px] leading-[30px] whitespace-nowrap text-white">
          www.ithome.com
        </div>
      </div>

      {/* w7 badge */}
      <div className="absolute right-0 bottom-0 w-[140px] h-[48px] bg-white rounded-tl-[30px] flex items-center pl-[13px] pt-[3px]">
        <svg width="32" height="24" viewBox="0 0 32 24" className="shrink-0">
          <path d="M0 0h10l6 24H9z" fill="#4aa2f2" />
          <path d="M11 0h21L24 24h-7l6-18H12.500z" fill="#1fb0fa" />
          <path d="M12.500 9h6l-2.500 9z" fill="#2a8ef0" />
        </svg>
        <div className="ml-[3px]">
          <div className="font-['Liberation_Sans','Noto_Sans_CJK_SC',sans-serif] font-bold text-[15px] leading-[16px] text-[#222222] whitespace-nowrap">W7系统之家</div>
          <div className="font-['Liberation_Sans',sans-serif] text-[10.500px] leading-[12px] text-[#8a8a8a] whitespace-nowrap">www.w7xitong.com</div>
        </div>
      </div>
    </div>
  );
}
